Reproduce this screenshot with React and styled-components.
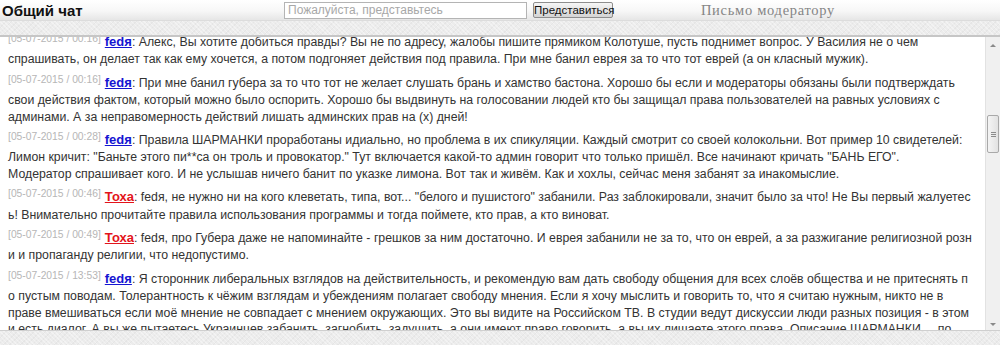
import React, { useLayoutEffect, useRef } from "react";
import styled, { createGlobalStyle } from "styled-components";

const GlobalStyle = createGlobalStyle`
  html, body {
    margin: 0;
    padding: 0;
    background: #fff;
    font-family: "Liberation Sans", Arial, sans-serif;
  }
`;

const Page = styled.div`
  width: 1000px;
  height: 345px;
  display: flex;
  flex-direction: column;
  overflow: hidden;
`;

const TopBar = styled.div`
  height: 20px;
  display: flex;
  align-items: center;
  background: linear-gradient(180deg, #ffffff 0%, #f7f7f7 55%, #e6e6e6 100%);
  padding-left: 2px;
`;

const Title = styled.div`
  width: 282px;
  font-size: 15px;
  font-weight: bold;
  color: #111;
`;

const NameInput = styled.input`
  box-sizing: border-box;
  width: 243px;
  height: 17px;
  border: 1px solid #b4b4b4;
  padding: 0 3px;
  font-family: "Liberation Sans", Arial, sans-serif;
  font-size: 12px;
  background: #fff;
  &::placeholder {
    color: #a8a8a8;
  }
`;

const JoinButton = styled.button`
  margin-left: 6px;
  width: 80px;
  height: 16px;
  padding: 0;
  border: 1px solid #8e8e8e;
  border-radius: 2px;
  background: linear-gradient(180deg, #f6f6f6 0%, #e4e4e4 50%, #d4d4d4 100%);
  font-family: "Liberation Sans", Arial, sans-serif;
  font-size: 11.5px;
  line-height: 14px;
  color: #111;
`;

const ModLink = styled.div`
  width: 310px;
  text-align: center;
  font-family: "Liberation Serif", "Times New Roman", serif;
  font-size: 14.5px;
  letter-spacing: 0.7px;
  color: #858585;
`;

const Band = styled.div`
  height: ${(p) => p.$h}px;
  flex-shrink: 0;
  background-color: #ececec;
  background-image: repeating-linear-gradient(
      45deg,
      rgba(255, 255, 255, 0.35) 0 1px,
      transparent 1px 3px
    ),
    repeating-linear-gradient(
      -45deg,
      rgba(0, 0, 0, 0.03) 0 1px,
      transparent 1px 4px
    );
  border-top: 1px solid ${(p) => (p.$bottom ? "#cfcfcf" : "#dcdcdc")};
  border-bottom: ${(p) => (p.$bottom ? "none" : "2px solid #c6c6c6")};
`;

const ChatArea = styled.div`
  flex: 1;
  display: flex;
  min-height: 0;
`;

const MessageList = styled.div`
  flex: 1;
  overflow: hidden;
  padding: 0 0 0 8px;
`;

const Message = styled.div`
  margin: 0 0 7px;
  font-size: 12.3px;
  line-height: 16.4px;
  color: #333;
  white-space: nowrap;
`;

const Stamp = styled.span`
  position: relative;
  top: -4px;
  font-size: 10.3px;
  color: #b6b6b6;
  margin-right: 4px;
`;

const Nick = styled.a`
  font-size: 13px;
  font-weight: bold;
  color: ${(p) => (p.$red ? "#e3141b" : "#1515d2")};
  text-decoration: underline;
`;

const ScrollTrack = styled.div`
  width: 14px;
  flex-shrink: 0;
  display: flex;
  flex-direction: column;
  align-items: center;
  background: #f0f0f0;
  border-left: 1px solid #e2e2e2;
  padding-top: 3px;
`;

const Arrow = styled.div`
  width: 0;
  height: 0;
  border-left: 3px solid transparent;
  border-right: 3px solid transparent;
  ${(p) =>
    p.$down
      ? "border-top: 3px solid #8a8a8a;"
      : "border-bottom: 3px solid #8a8a8a;"}
  margin: 4px 0;
`;

const Thumb = styled.div`
  box-sizing: border-box;
  width: 12px;
  height: 38px;
  margin-top: 64px;
  border: 1px solid #a9a9a9;
  border-radius: 2px;
  background: linear-gradient(90deg, #f4f4f4 0%, #e2e2e2 100%);
  display: flex;
  flex-direction: column;
  align-items: center;
  justify-content: center;
  gap: 1px;
`;

const Grip = styled.div`
  width: 5px;
  height: 1px;
  background: #8c8c8c;
`;

const Spacer = styled.div`
  flex: 1;
`;

const messages = [
  {
    time: "05-07-2015 / 00:16",
    nick: "fedя",
    lines: [
      "Алекс, Вы хотите добиться правды? Вы не по адресу, жалобы пишите прямиком Колотуше, пусть поднимет вопрос. У Василия не о чем",
      "спрашивать, он делает так как ему хочется, а потом подгоняет действия под правила. При мне банил еврея за то что тот еврей (а он класный мужик).",
    ],
  },
  {
    time: "05-07-2015 / 00:16",
    nick: "fedя",
    lines: [
      "При мне банил губера за то что тот не желает слушать брань и хамство бастона. Хорошо бы если и модераторы обязаны были подтверждать",
      "свои действия фактом, который можно было оспорить. Хорошо бы выдвинуть на голосовании людей кто бы защищал права пользователей на равных условиях с",
      "админами. А за неправомерность действий лишать админских прав на (х) дней!",
    ],
  },
  {
    time: "05-07-2015 / 00:28",
    nick: "fedя",
    lines: [
      "Правила ШАРМАНКИ проработаны идиально, но проблема в их спикуляции. Каждый смотрит со своей колокольни. Вот пример 10 свидетелей:",
      "Лимон кричит: \"Баньте этого пи**са он троль и провокатор.\" Тут включается какой-то админ говорит что только пришёл. Все начинают кричать \"БАНЬ ЕГО\".",
      "Модератор спрашивает кого. И не услышав ничего банит по указке лимона. Вот так и живём. Как и хохлы, сейчас меня забанят за инакомыслие.",
    ],
  },
  {
    time: "05-07-2015 / 00:46",
    nick: "Тоха",
    red: true,
    lines: [
      "fedя, не нужно ни на кого клеветать, типа, вот... \"белого и пушистого\" забанили. Раз заблокировали, значит было за что! Не Вы первый жалуетес",
      "ь! Внимательно прочитайте правила использования программы и тогда поймете, кто прав, а кто виноват.",
    ],
  },
  {
    time: "05-07-2015 / 00:49",
    nick: "Тоха",
    red: true,
    lines: [
      "fedя, про Губера даже не напоминайте - грешков за ним достаточно. И еврея забанили не за то, что он еврей, а за разжигание религиозной розн",
      "и и пропаганду религии, что недопустимо.",
    ],
  },
  {
    time: "05-07-2015 / 13:53",
    nick: "fedя",
    lines: [
      "Я сторонник либеральных взглядов на действительность, и рекомендую вам дать свободу общения для всех слоёв общества и не притеснять п",
      "о пустым поводам. Толерантность к чёжим взглядам и убеждениям полагает свободу мнения. Если я хочу мыслить и говорить то, что я считаю нужным, никто не в",
      "праве вмешиваться если моё мнение не совпадает с мнением окружающих. Это вы видите на Российском ТВ. В студии ведут дискуссии люди разных позиция - в этом",
      "и есть диалог. А вы же пытаетесь Украинцев забанить, загнобить, задушить, а они имеют право говорить, а вы их лишаете этого права. Описание ШАРМАНКИ ... по",
    ],
  },
];

const ChatMessage = ({ msg }) => (
  <Message>
    <Stamp>[{msg.time}]</Stamp>
    <Nick $red={msg.red}>{msg.nick}</Nick>: {msg.lines[0]}
    {msg.lines.slice(1).map((line, i) => (
      <React.Fragment key={i}>
        <br />
        {line}
      </React.Fragment>
    ))}
  </Message>
);

export default function App() {
  const listRef = useRef(null);

  useLayoutEffect(() => {
    // chat is scrolled a little, first message is cut by the band
    if (listRef.current) listRef.current.scrollTop = 3;
  }, []);

  return (
    <Page>
      <GlobalStyle />
      <TopBar>
        <Title>Общий чат</Title>
        <NameInput placeholder="Пожалуйста, представьтесь" />
        <JoinButton>Представиться</JoinButton>
        <ModLink>Письмо модератору</ModLink>
      </TopBar>
      <Band $h={14} />
      <ChatArea>
        <MessageList ref={listRef}>
          {messages.map((m, i) => (
            <ChatMessage key={i} msg={m} />
          ))}
        </MessageList>
        <ScrollTrack>
          <Arrow />
          <Thumb>
            <Grip />
            <Grip />
            <Grip />
          </Thumb>
          <Spacer />
          <Arrow $down />
        </ScrollTrack>
      </ChatArea>
      <Band $h={14} $bottom />
    </Page>
  );
}
